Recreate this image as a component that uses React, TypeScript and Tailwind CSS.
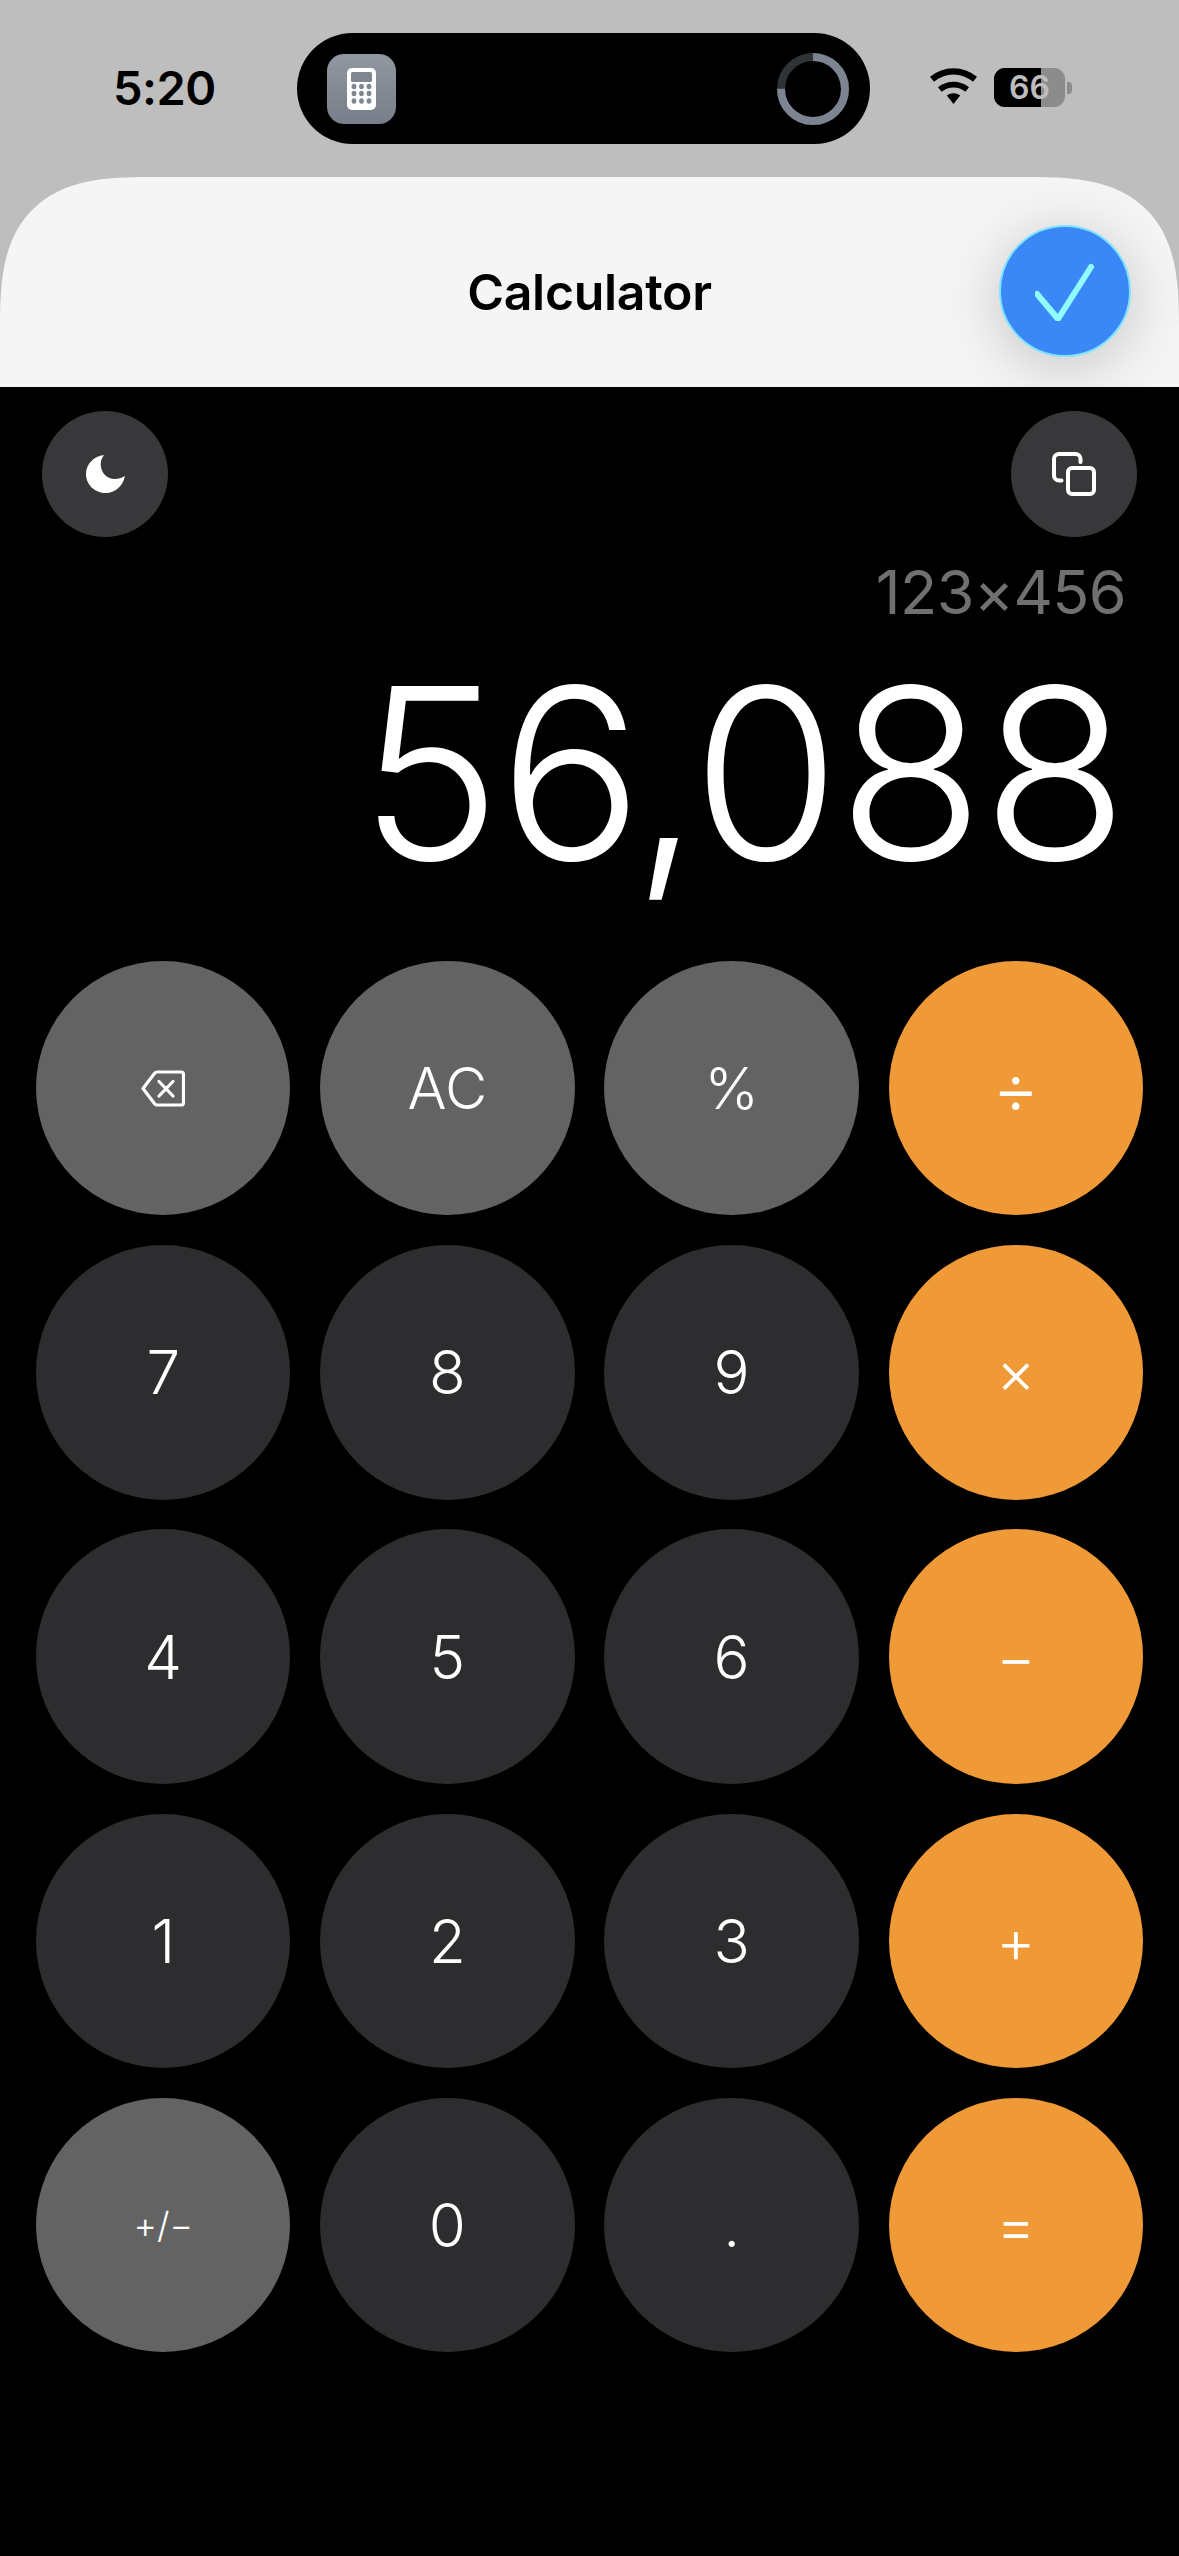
import React from "react";

const font = { fontFamily: "Inter, 'Liberation Sans', sans-serif" };

function Ring() {
  return (
    <svg width="76" height="76" viewBox="0 0 76 76" className="block">
      <circle cx="38" cy="38" r="32" fill="none" stroke="#2f3336" strokeWidth="8" />
      <circle cx="38" cy="38" r="32" fill="none" stroke="#7b8490" strokeWidth="8" strokeDasharray="150.8 201.1" transform="rotate(-90 38 38)" />
    </svg>
  );
}

function AppIcon() {
  return (
    <div className="w-[69px] h-[70px] rounded-[17px] flex items-center justify-center bg-gradient-to-b from-[#90979f] to-[#787e8a]">
      <svg width="29" height="42" viewBox="0 0 29 42">
        <rect width="29" height="42" rx="5" fill="#fff" />
        <rect x="4" y="4" width="21" height="10" rx="1.5" fill="#7f8690" />
        {[18.5, 25.5, 33].map((y) => [7, 14.5, 22].map((x) => <ellipse key={`${x}-${y}`} cx={x} cy={y} rx="2.4" ry="2.7" fill="#7f8690" />))}
      </svg>
    </div>
  );
}

function Wifi() {
  return (
    <svg width="47" height="36" viewBox="0 0 47 36" className="block">
      <path d="M23.5 36 16.8 27.6a10.5 10.5 0 0 1 13.4 0Z" fill="#000" />
      <path d="M11.6 21.2a18.6 18.6 0 0 1 23.8 0l3.6-4.5a24.6 24.6 0 0 0-31 0Z" fill="#000" transform="translate(0 2.5)" />
      <path d="M0 8.8a36.5 36.5 0 0 1 47 0l-4 5a30 30 0 0 0-39 0Z" fill="#000" />
    </svg>
  );
}

function Battery() {
  return (
    <div className="flex items-center">
      <div className="relative w-[71px] h-[39px] rounded-[11px] overflow-hidden bg-[#8c8c8c] flex items-center justify-center">
        <div className="absolute left-0 top-0 bottom-0 w-[47px] bg-black" />
        <span className="relative text-[#bdbdbd] text-[32px] font-semibold leading-none" style={font}>66</span>
      </div>
      <div className="w-[5px] h-[12px] ml-[2px] rounded-r-[4px] bg-[#8c8c8c]" />
    </div>
  );
}

function Moon() {
  return (
    <svg width="39" height="39" viewBox="0 0 39 39">
      <path d="M18 0C13 6 14 15 19 20C24 25 32 25 39 21C37 31 29 38 20 38C9 38 0 30 0 19C0 9 8 1 18 0Z" fill="#fff" />
    </svg>
  );
}

function Copy() {
  return (
    <svg width="46" height="46" viewBox="0 0 46 46" fill="none" stroke="#fff" strokeWidth="4" strokeLinecap="round" strokeLinejoin="round">
      <rect x="17" y="17" width="26" height="26" rx="4" />
      <path d="M29.5 11V8a5 5 0 0 0-5-5H8a5 5 0 0 0-5 5v16.5a5 5 0 0 0 5 5h2.5" />
    </svg>
  );
}

function Backspace() {
  return (
    <svg width="44" height="37" viewBox="0 0 44 37" fill="none" stroke="#fff" strokeWidth="3.2" strokeLinecap="round" strokeLinejoin="round">
      <path d="M16 2h24a2.5 2.5 0 0 1 2.5 2.5v28a2.5 2.5 0 0 1-2.5 2.5H16a3 3 0 0 1-2.2-1L2 18.5 13.8 3a3 3 0 0 1 2.2-1Z" />
      <path d="M18 11.5 32 26M32 11.5 18 26" />
    </svg>
  );
}

const gray = "bg-[#636364]";
const dark = "bg-[#2d2d2f]";
const orange = "bg-[#f09a37]";

type Key = { label?: string; bg: string; size?: string; icon?: boolean };

const keys: Key[] = [
  { bg: gray, icon: true },
  { label: "AC", bg: gray, size: "text-[58px]" },
  { label: "%", bg: gray, size: "text-[58px]" },
  { label: "÷", bg: orange, size: "text-[72px]" },
  { label: "7", bg: dark },
  { label: "8", bg: dark },
  { label: "9", bg: dark },
  { label: "×", bg: orange, size: "text-[60px]" },
  { label: "4", bg: dark },
  { label: "5", bg: dark },
  { label: "6", bg: dark },
  { label: "−", bg: orange, size: "text-[60px]" },
  { label: "1", bg: dark },
  { label: "2", bg: dark },
  { label: "3", bg: dark },
  { label: "+", bg: orange, size: "text-[60px]" },
  { label: "+/−", bg: gray, size: "text-[36px]" },
  { label: "0", bg: dark },
  { label: ".", bg: dark },
  { label: "=", bg: orange, size: "text-[60px]" },
];

export default function App() {
  return (
    <div className="w-[1179px] h-[2556px] bg-black flex flex-col overflow-hidden" style={font}>
      <div className="bg-[#bebebe]">
        <div className="h-[177px] relative flex items-start">
          <div className="ml-[113px] mt-[60px] text-[47px] leading-[56px] font-semibold text-black w-[184px] tracking-[-0.5px]">5:20</div>
          <div className="mt-[33px] w-[573px] h-[111px] rounded-full bg-black flex items-center justify-between pl-[30px] pr-[19px]">
            <AppIcon />
            <Ring />
          </div>
          <div className="mt-[68px] ml-[60px]"><Wifi /></div>
          <div className="mt-[68px] ml-[17px]"><Battery /></div>
        </div>
        <div className="relative h-[210px] bg-[#f5f5f5] rounded-t-[150px] [corner-shape:superellipse(1.5)] overflow-hidden flex items-center justify-center pt-[20px]">
          <span className="text-[50px] font-semibold text-black tracking-[-0.3px]">Calculator</span>
          <div className="absolute left-[999px] top-[48px] w-[132px] h-[132px] rounded-full bg-[#3b87f5] border-2 border-[#7fe3ff] flex items-center justify-center shadow-[0_10px_60px_rgba(0,0,0,0.2)]">
            <svg width="60" height="60" viewBox="0 0 60 60" fill="none" stroke="#8ffcff" strokeWidth="6" strokeLinecap="round" strokeLinejoin="round">
              <path d="M2 33 L23 58 L56 6" />
            </svg>
          </div>
        </div>
      </div>

      <div className="flex-1 bg-black flex flex-col">
        <div className="mt-[24px] px-[42px] flex justify-between">
          <div className="w-[126px] h-[126px] rounded-full bg-[#38383a] flex items-center justify-center"><Moon /></div>
          <div className="w-[126px] h-[126px] rounded-full bg-[#38383a] flex items-center justify-center"><Copy /></div>
        </div>
        <div className="h-[424px] flex flex-col items-end pr-[53px]">
          <div className="mt-[19px] text-[61px] leading-[72px] text-[#707070] font-normal tracking-[-0.6px]">123×456</div>
          <div className="mt-[10px] text-[239px] leading-[270px] text-white font-[330] tracking-[-2px]">56,088</div>
        </div>
        <div className="px-[36px] grid grid-cols-4 gap-[29.8px]">
          {keys.map((k, i) => (
            <div key={i} className={`aspect-square rounded-full flex items-center justify-center text-white font-[350] leading-none ${k.bg} ${k.size ?? "text-[60px]"}`}>
              {k.icon ? <Backspace /> : k.label}
            </div>
          ))}
        </div>
      </div>
    </div>
  );
}
